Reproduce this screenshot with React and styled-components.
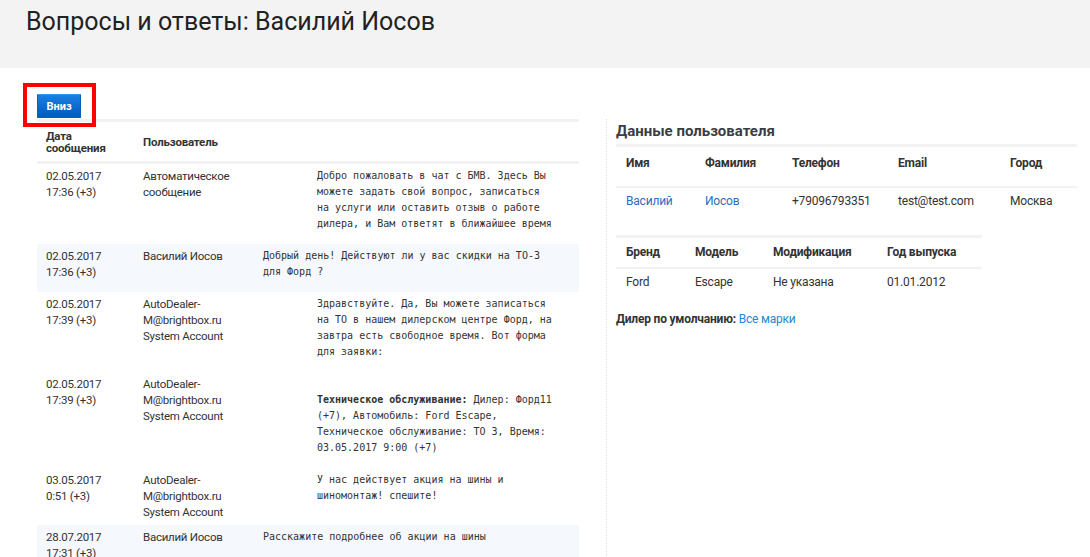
import React from "react";
import styled, { createGlobalStyle } from "styled-components";

const GlobalStyle = createGlobalStyle`
  html, body {
    margin: 0;
    padding: 0;
    background: #fff;
  }
  body {
    font-family: Roboto, "Liberation Sans", Arial, sans-serif;
    font-size: 12px;
    color: #333;
  }
`;

const messages = [
  {
    id: 1,
    date: "02.05.2017",
    time: "17:36 (+3)",
    user: "Автоматическое сообщение",
    system: true,
    text: "Добро пожаловать в чат с БМВ. Здесь Вы можете задать свой вопрос, записаться на услуги или оставить отзыв о работе дилера, и Вам ответят в ближайшее время",
  },
  {
    id: 2,
    date: "02.05.2017",
    time: "17:36 (+3)",
    user: "Василий Иосов",
    text: "Добрый день! Действуют ли у вас скидки на ТО-3 для Форд ?",
  },
  {
    id: 3,
    date: "02.05.2017",
    time: "17:39 (+3)",
    user: "AutoDealer-M@brightbox.ru System Account",
    system: true,
    text: "Здравствуйте. Да, Вы можете записаться на ТО в нашем дилерском центре Форд, на завтра есть свободное время. Вот форма для заявки:",
  },
  {
    id: 4,
    date: "02.05.2017",
    time: "17:39 (+3)",
    user: "AutoDealer-M@brightbox.ru System Account",
    system: true,
    form: true,
  },
  {
    id: 5,
    date: "03.05.2017",
    time: "0:51 (+3)",
    user: "AutoDealer-M@brightbox.ru System Account",
    system: true,
    text: "У нас действует акция на шины и шиномонтаж! спешите!",
  },
  {
    id: 6,
    date: "28.07.2017",
    time: "17:31 (+3)",
    user: "Василий Иосов",
    text: "Расскажите подробнее об акции на шины",
  },
];

class App extends React.Component {
  render() {
    return (
      <Page>
        <GlobalStyle />
        <Header>
          <h1>Вопросы и ответы: Василий Иосов</h1>
        </Header>
        <Main>
          <ChatColumn>
            <ButtonBar>
              <DownButton>Вниз</DownButton>
              <Highlight />
            </ButtonBar>
            <ChatTable>
              <colgroup>
                <col style={{ width: 97 }} />
                <col style={{ width: 120 }} />
                <col />
              </colgroup>
              <thead>
                <tr>
                  <ChatTh>
                    Дата
                    <br />
                    сообщения
                  </ChatTh>
                  <ChatTh>Пользователь</ChatTh>
                  <ChatTh />
                </tr>
              </thead>
              <tbody>
                {messages.map((m) => (
                  <ChatRow key={m.id} $mine={!m.system}>
                    <ChatTd>
                      {m.date}
                      <br />
                      {m.time}
                    </ChatTd>
                    <ChatTd>{m.user}</ChatTd>
                    <MessageTd $system={m.system}>
                      {m.form ? (
                        <p>
                          <br />
                          <b>Техническое обслуживание:</b> Дилер: Форд11 (+7),
                          Автомобиль: Ford Escape, Техническое обслуживание: ТО
                          3, Время: 03.05.2017 9:00 (+7)
                        </p>
                      ) : (
                        <p>{m.text}</p>
                      )}
                    </MessageTd>
                  </ChatRow>
                ))}
              </tbody>
            </ChatTable>
          </ChatColumn>
          <InfoColumn>
            <h3>Данные пользователя</h3>
            <InfoTable $width={461} $gap={21}>
              <colgroup>
                <col style={{ width: 79 }} />
                <col style={{ width: 87 }} />
                <col style={{ width: 106 }} />
                <col style={{ width: 112 }} />
                <col style={{ width: 77 }} />
              </colgroup>
              <thead>
                <tr>
                  <InfoTh $tall>Имя</InfoTh>
                  <InfoTh $tall>Фамилия</InfoTh>
                  <InfoTh $tall>Телефон</InfoTh>
                  <InfoTh $tall>Email</InfoTh>
                  <InfoTh $tall>Город</InfoTh>
                </tr>
              </thead>
              <tbody>
                <tr>
                  <InfoTd>
                    <Link>Василий</Link>
                  </InfoTd>
                  <InfoTd>
                    <Link>Иосов</Link>
                  </InfoTd>
                  <InfoTd>+79096793351</InfoTd>
                  <InfoTd>test@test.com</InfoTd>
                  <InfoTd>Москва</InfoTd>
                </tr>
              </tbody>
            </InfoTable>
            <InfoTable $width={366} $gap={16}>
              <colgroup>
                <col style={{ width: 69 }} />
                <col style={{ width: 78 }} />
                <col style={{ width: 114 }} />
                <col style={{ width: 105 }} />
              </colgroup>
              <thead>
                <tr>
                  <InfoTh>Бренд</InfoTh>
                  <InfoTh>Модель</InfoTh>
                  <InfoTh>Модификация</InfoTh>
                  <InfoTh>Год выпуска</InfoTh>
                </tr>
              </thead>
              <tbody>
                <tr>
                  <InfoTd>Ford</InfoTd>
                  <InfoTd>Escape</InfoTd>
                  <InfoTd>Не указана</InfoTd>
                  <InfoTd>01.01.2012</InfoTd>
                </tr>
              </tbody>
            </InfoTable>
            <Dealer>
              <b>Дилер по умолчанию:</b> <DealerLink>Все марки</DealerLink>
            </Dealer>
          </InfoColumn>
        </Main>
      </Page>
    );
  }
}

const Page = styled.div`
  width: 1090px;
  min-height: 557px;
  overflow: hidden;
`;

const Header = styled.div`
  height: 68px;
  background: #f3f3f3;
  padding: 7px 0 0 26px;
  box-sizing: border-box;
  h1 {
    margin: 0;
    font-size: 25px;
    line-height: 30px;
    font-weight: 400;
    color: #222;
  }
`;

const Main = styled.div`
  display: flex;
  align-items: stretch;
  padding: 26px 13px 0 37px;
  gap: 27px;
`;

const ChatColumn = styled.div`
  width: 542px;
  flex-shrink: 0;
`;

const ButtonBar = styled.div`
  position: relative;
  height: 25px;
`;

const DownButton = styled.button`
  display: block;
  width: 44px;
  height: 24px;
  padding: 0;
  border: 1px solid #0b5fb8;
  border-top-color: #3d94e6;
  border-radius: 1px;
  background: linear-gradient(#1a80e0, #0058c2);
  color: #fff;
  font-family: Roboto, "Liberation Sans", sans-serif;
  font-size: 11px;
  font-weight: 700;
`;

const Highlight = styled.div`
  position: absolute;
  left: -14px;
  top: -11px;
  width: 73px;
  height: 44px;
  box-sizing: border-box;
  border: 4px solid #f00;
  z-index: 2;
`;

const ChatTable = styled.table`
  width: 542px;
  table-layout: fixed;
  border-collapse: collapse;
  border-top: 3px solid #f2f2f2;
`;

const ChatTh = styled.th`
  text-align: left;
  vertical-align: middle;
  padding: 8px 9px 7px;
  font-size: 11.5px;
  letter-spacing: -0.2px;
  line-height: 12px;
  font-weight: 700;
  color: #333;
  border-bottom: 3px solid #f2f2f2;
`;

const ChatRow = styled.tr`
  background: ${(p) => (p.$mine ? "#f5f8fc" : "#fff")};
`;

const ChatTd = styled.td`
  vertical-align: top;
  padding: 4px 9px 5px;
  font-size: 11.5px;
  letter-spacing: -0.25px;
  line-height: 16px;
  color: #333;
`;

const MessageTd = styled(ChatTd)`
  padding-left: ${(p) => (p.$system ? "63px" : "9px")};
  padding-right: 26px;
  font-family: "DejaVu Sans Mono", "Liberation Mono", monospace;
  font-size: 10px;
  letter-spacing: 0;
  p {
    margin: 0 0 7px;
  }
  b {
    font-weight: 700;
  }
`;

const InfoColumn = styled.div`
  flex: 1;
  margin-top: 25px;
  border-left: 1px dotted #dcdcdc;
  padding-left: 9px;
  min-height: 420px;
  h3 {
    margin: 3px 0 4px;
    font-size: 15px;
    line-height: 18px;
    font-weight: 700;
    color: #3a3d42;
  }
`;

const InfoTable = styled.table`
  width: ${(p) => p.$width}px;
  table-layout: fixed;
  border-collapse: collapse;
  border-top: 3px solid #f2f2f2;
  margin-bottom: ${(p) => p.$gap}px;
`;

const InfoTh = styled.th`
  text-align: left;
  vertical-align: top;
  padding: ${(p) => (p.$tall ? "8px 10px 15px" : "6px 10px 7px")};
  font-size: 12px;
  letter-spacing: -0.2px;
  line-height: 16px;
  font-weight: 700;
  color: #333;
  border-bottom: 2px solid #f2f2f2;
`;

const InfoTd = styled.td`
  padding: 5px 10px;
  font-size: 12px;
  letter-spacing: -0.2px;
  line-height: 16px;
  color: #333;
  white-space: nowrap;
`;

const Link = styled.span`
  color: #2a6fbe;
`;

const Dealer = styled.div`
  font-size: 12px;
  letter-spacing: -0.2px;
  line-height: 16px;
  color: #333;
  b {
    font-weight: 700;
  }
`;

const DealerLink = styled.span`
  color: #1e88d6;
`;

export default App;
